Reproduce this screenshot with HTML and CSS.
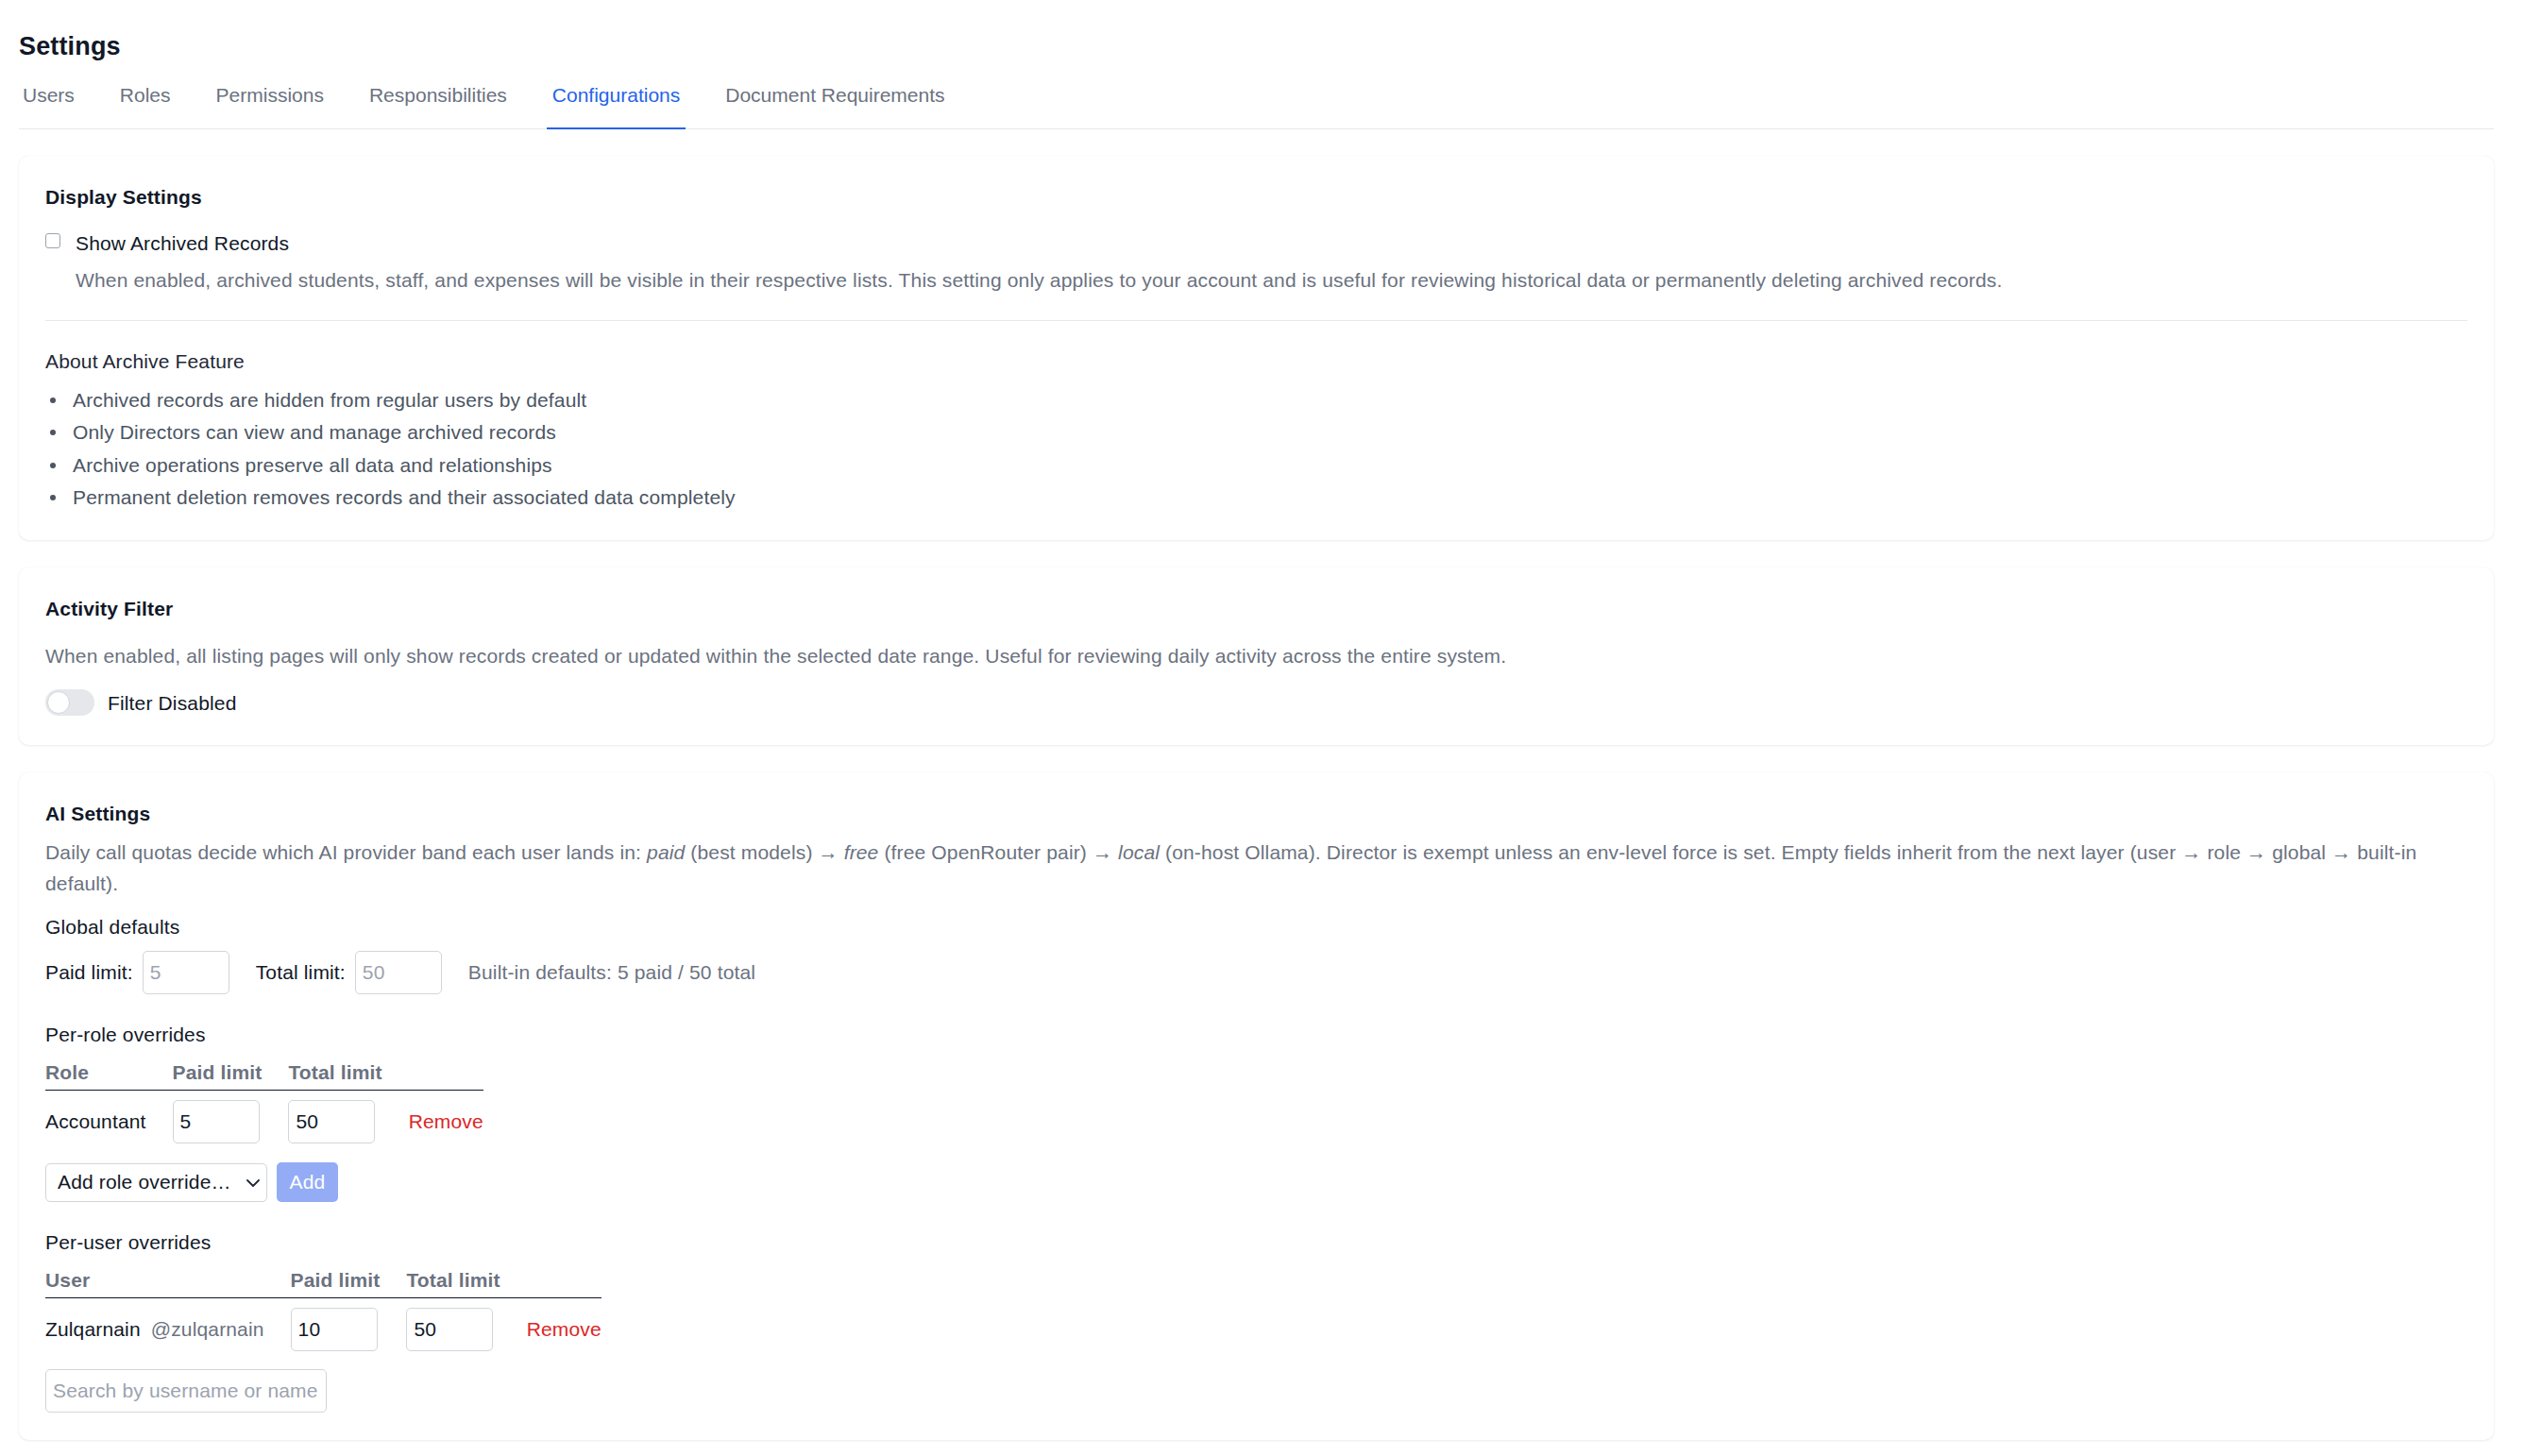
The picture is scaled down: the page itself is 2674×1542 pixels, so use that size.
FILE: index.html
```html
<!doctype html>
<html lang="en">
<head>
    <meta charset="UTF-8">
    <title>Settings</title>
    <link rel="stylesheet" href="styles.css">
</head>
<body>
  <div class="page">
    <h1 class="page-title">Settings</h1>
    <nav class="tabs">
      <a class="tab" href="#">Users</a>
      <a class="tab" href="#">Roles</a>
      <a class="tab" href="#">Permissions</a>
      <a class="tab" href="#">Responsibilities</a>
      <a class="tab tab-active" href="#">Configurations</a>
      <a class="tab" href="#">Document Requirements</a>
    </nav>

    <div class="cards">
      <section class="card">
        <h2 class="card-title">Display Settings</h2>
        <label class="check-row">
          <input type="checkbox" class="check">
          <span>Show Archived Records</span>
        </label>
        <p class="check-help">When enabled, archived students, staff, and expenses will be visible in their respective lists. This setting only applies to your account and is useful for reviewing historical data or permanently deleting archived records.</p>
        <hr class="divider">
        <h3 class="sub-title">About Archive Feature</h3>
        <ul class="info-list">
          <li>Archived records are hidden from regular users by default</li>
          <li>Only Directors can view and manage archived records</li>
          <li>Archive operations preserve all data and relationships</li>
          <li>Permanent deletion removes records and their associated data completely</li>
        </ul>
      </section>

      <section class="card">
        <h2 class="card-title">Activity Filter</h2>
        <p class="card-desc">When enabled, all listing pages will only show records created or updated within the selected date range. Useful for reviewing daily activity across the entire system.</p>
        <div class="toggle-row">
          <span class="toggle"><span class="toggle-knob"></span></span>
          <span>Filter Disabled</span>
        </div>
      </section>

      <section class="card">
        <h2 class="card-title">AI Settings</h2>
        <p class="ai-desc">Daily call quotas decide which AI provider band each user lands in: <em>paid</em> (best models) → <em>free</em> (free OpenRouter pair) → <em>local</em> (on-host Ollama). Director is exempt unless an env-level force is set. Empty fields inherit from the next layer (user → role → global → built-in default).</p>

        <div class="group-label first">Global defaults</div>
        <div class="limit-row">
          <label class="limit-field">Paid limit: <input class="limit-input" type="text" placeholder="5"></label>
          <label class="limit-field">Total limit: <input class="limit-input" type="text" placeholder="50"></label>
          <span class="limit-note">Built-in defaults: 5 paid / 50 total</span>
        </div>

        <div class="group-label">Per-role overrides</div>
        <table class="override-table">
          <thead>
            <tr><th>Role</th><th>Paid limit</th><th>Total limit</th><th></th></tr>
          </thead>
          <tbody>
            <tr>
              <td>Accountant</td>
              <td><input class="limit-input" type="text" value="5"></td>
              <td><input class="limit-input" type="text" value="50"></td>
              <td><a class="remove" href="#">Remove</a></td>
            </tr>
          </tbody>
        </table>
        <div class="add-row">
          <div class="select-wrap">
            <select class="role-select">
              <option>Add role override…</option>
            </select>
            <svg class="select-chevron" width="14" height="8" viewBox="0 0 14 8"><path d="M1 1l6 6 6-6" fill="none" stroke="#1f2937" stroke-width="1.8" stroke-linecap="round" stroke-linejoin="round"/></svg>
          </div>
          <button class="add-btn" disabled>Add</button>
        </div>

        <div class="group-label">Per-user overrides</div>
        <table class="override-table">
          <thead>
            <tr><th>User</th><th>Paid limit</th><th>Total limit</th><th></th></tr>
          </thead>
          <tbody>
            <tr>
              <td>Zulqarnain <span class="username">@zulqarnain</span></td>
              <td><input class="limit-input" type="text" value="10"></td>
              <td><input class="limit-input" type="text" value="50"></td>
              <td><a class="remove" href="#">Remove</a></td>
            </tr>
          </tbody>
        </table>
        <input class="user-search" type="text" placeholder="Search by username or name">
      </section>
    </div>
  </div>
</body>
</html>
```

FILE: styles.css
```css
body {
  margin: 0;
  background: #fff;
  color: #111827;
  font-family: "Liberation Sans", Arial, Helvetica, sans-serif;
  font-size: 21px;
  line-height: 1.5;
  letter-spacing: 0.15px;
}
.page {
  padding: 29px 33px 17px 20px;
}
.page-title {
  margin: 0;
  font-size: 27px;
  line-height: 40px;
  font-weight: 700;
}

/* tabs */
.tabs {
  display: flex;
  gap: 36px;
  margin-top: 16px;
  border-bottom: 1px solid #e5e7eb;
  letter-spacing: 0;
}
.tab {
  padding: 0 6px 18px;
  margin-bottom: -1px;
  color: #6b7280;
  text-decoration: none;
  border-bottom: 2px solid transparent;
}
.tab:first-child {
  margin-left: -2px;
}
.tab-active {
  color: #2563eb;
  border-bottom-color: #2563eb;
}

/* cards */
.cards {
  display: flex;
  flex-direction: column;
  gap: 29px;
  margin-top: 28px;
}
.card {
  background: #fff;
  border-radius: 10px;
  box-shadow: 0 1px 3px rgba(0, 0, 0, 0.08), 0 0 1px rgba(0, 0, 0, 0.07);
  padding: 28px 28px 29px;
}
.card-title {
  margin: 0;
  font-size: 21px;
  font-weight: 700;
}

.check-row {
  display: flex;
  align-items: flex-start;
  gap: 16px;
  margin-top: 18px;
}
.check {
  appearance: none;
  flex: none;
  width: 16px;
  height: 16px;
  margin: 5px 0 0;
  border: 1px solid #9ca3af;
  border-radius: 3px;
  background: #fff;
}
.check-help {
  margin: 7px 0 0 32px;
  color: #6b7280;
}
.divider {
  border: 0;
  border-top: 1px solid #e5e7eb;
  margin: 27px 0 0;
}
.sub-title {
  margin: 27px 0 0;
  font-size: 21px;
  font-weight: 400;
  color: #1f2937;
}
.info-list {
  margin: 9px 0 0;
  padding-left: 29px;
  list-style: none;
  color: #4b5563;
}
.info-list li::before {
  content: "";
  display: inline-block;
  width: 6px;
  height: 6px;
  margin: 0 18px 0 -24px;
  border-radius: 50%;
  background: currentColor;
  vertical-align: 4px;
}
.info-list li + li {
  margin-top: 3px;
}

.card-desc {
  margin: 19px 0 0;
  color: #6b7280;
}
.toggle-row {
  display: flex;
  align-items: center;
  gap: 14px;
  margin-top: 18px;
}
.toggle {
  display: flex;
  flex: none;
  box-sizing: border-box;
  width: 52px;
  height: 28px;
  padding: 2px;
  border-radius: 14px;
  background: #e5e7eb;
}
.toggle-knob {
  box-sizing: border-box;
  width: 24px;
  height: 24px;
  border-radius: 50%;
  background: #fff;
  border: 1px solid #d1d5db;
}

/* ai settings */
.ai-desc {
  margin: 8px 0 0;
  line-height: 33px;
  color: #6b7280;
}
.group-label {
  margin-top: 27px;
}
.group-label.first {
  margin-top: 14px;
}
.limit-row {
  display: flex;
  align-items: center;
  gap: 28px;
  margin-top: 10px;
}
.limit-field {
  display: flex;
  align-items: center;
  gap: 10px;
}
.limit-note {
  color: #6b7280;
}
.limit-input {
  box-sizing: border-box;
  width: 92px;
  height: 46px;
  padding: 0 7px;
  border: 1px solid #d1d5db;
  border-radius: 5px;
  font: inherit;
  letter-spacing: inherit;
  color: #111827;
  background: #fff;
}
.limit-input::placeholder,
.user-search::placeholder {
  color: #9ca3af;
}

.override-table {
  border-collapse: collapse;
  margin-top: 8px;
}
.override-table th {
  text-align: left;
  font-weight: 700;
  color: #6b7280;
  padding: 0 28px 3px 0;
  border-bottom: 1px solid #111827;
}
.override-table td {
  padding: 10px 28px 0 0;
  vertical-align: middle;
}
.override-table th:last-child,
.override-table td:last-child {
  padding-right: 0;
}
.username {
  margin-left: 5px;
  color: #6b7280;
}
.remove {
  color: #dc2626;
  text-decoration: none;
}

.add-row {
  display: flex;
  align-items: center;
  gap: 10px;
  margin-top: 20px;
}
.select-wrap {
  position: relative;
  display: flex;
}
.role-select {
  appearance: none;
  box-sizing: border-box;
  width: 235px;
  height: 41px;
  padding: 0 36px 0 12px;
  border: 1px solid #d1d5db;
  border-radius: 5px;
  background: #fff;
  font: inherit;
  letter-spacing: inherit;
  color: #111827;
}
.select-chevron {
  position: absolute;
  right: 8px;
  top: 17px;
  pointer-events: none;
}
.add-btn {
  width: 65px;
  height: 42px;
  padding: 0;
  border: 0;
  border-radius: 5px;
  background: #93acf5;
  color: #fff;
  font: inherit;
  letter-spacing: inherit;
}
.user-search {
  display: block;
  box-sizing: border-box;
  width: 298px;
  height: 46px;
  margin-top: 19px;
  padding: 0 7px;
  border: 1px solid #d1d5db;
  border-radius: 5px;
  font: inherit;
  letter-spacing: inherit;
  color: #111827;
}
```
